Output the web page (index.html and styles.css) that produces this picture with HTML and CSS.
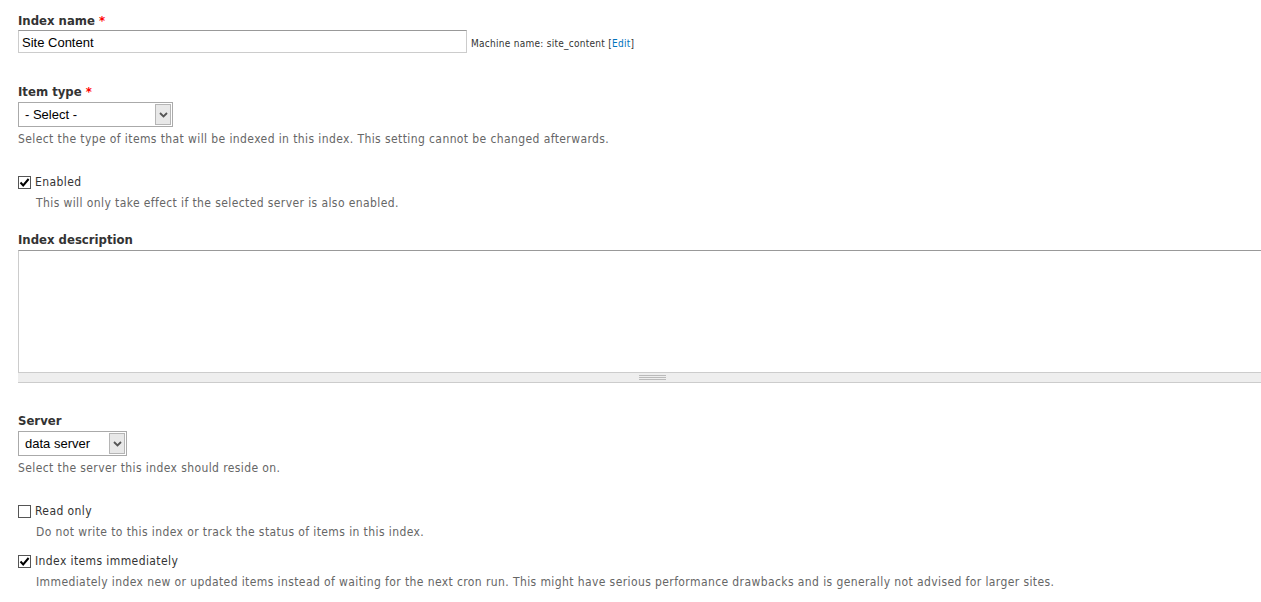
FILE: index.html
```html
<!DOCTYPE html>
<html>
<head>
<meta charset="utf-8">
<link rel="stylesheet" href="styles.css">
</head>
<body>
<form class="form">
  <div class="item item-name">
    <div class="label label-first">Index name <span class="req">*</span></div>
    <div class="row">
      <div class="text-input">Site Content</div>
      <span class="machine">Machine name: site_content <span class="link-wrap">[<a class="link">Edit</a>]</span></span>
    </div>
  </div>

  <div class="item item-type">
    <div class="label">Item type <span class="req">*</span></div>
    <div class="select select-type"><span class="select-text">- Select -</span><span class="select-btn"><svg width="9" height="6" viewBox="0 0 9 6"><path d="M1 1 L4.5 4.5 L8 1" fill="none" stroke="#555" stroke-width="1.8"/></svg></span></div>
    <div class="desc">Select the type of items that will be indexed in this index. This setting cannot be changed afterwards.</div>
  </div>

  <div class="item check-item item-enabled">
    <div class="check-row"><span class="box"><svg width="11" height="11" viewBox="0 0 11 11"><path d="M1.5 5.5 L4.2 8.4 L9.6 2" fill="none" stroke="#000" stroke-width="2"/></svg></span><span class="check-label">Enabled</span></div>
    <div class="desc indent">This will only take effect if the selected server is also enabled.</div>
  </div>

  <div class="item item-desc">
    <div class="label">Index description</div>
    <div class="textarea-wrap">
      <div class="textarea"></div>
      <div class="grippie"><span class="grip"></span></div>
    </div>
  </div>

  <div class="item item-server">
    <div class="label">Server</div>
    <div class="select select-server"><span class="select-text">data server</span><span class="select-btn"><svg width="9" height="6" viewBox="0 0 9 6"><path d="M1 1 L4.5 4.5 L8 1" fill="none" stroke="#555" stroke-width="1.8"/></svg></span></div>
    <div class="desc">Select the server this index should reside on.</div>
  </div>

  <div class="item check-item item-readonly">
    <div class="check-row"><span class="box"></span><span class="check-label">Read only</span></div>
    <div class="desc indent">Do not write to this index or track the status of items in this index.</div>
  </div>

  <div class="item check-item item-immediate">
    <div class="check-row"><span class="box"><svg width="11" height="11" viewBox="0 0 11 11"><path d="M1.5 5.5 L4.2 8.4 L9.6 2" fill="none" stroke="#000" stroke-width="2"/></svg></span><span class="check-label">Index items immediately</span></div>
    <div class="desc indent">Immediately index new or updated items instead of waiting for the next cron run. This might have serious performance drawbacks and is generally not advised for larger sites.</div>
  </div>
</form>
</body>
</html>
```

FILE: styles.css
```css
html {
  overflow: hidden;
}
body {
  margin: 0;
  background: #fff;
  color: #333;
  font-family: "DejaVu Sans Condensed", "DejaVu Sans", sans-serif;
}
.form {
  padding: 12px 0 0 18px;
}
.item {
  display: flex;
  flex-direction: column;
  align-items: flex-start;
}
.label {
  font-weight: bold;
  font-size: 13px;
  line-height: 18px;
  color: #333;
  margin-bottom: 1px;
}
.label-first {
  margin-bottom: 0;
}
.req {
  color: #f00;
}
.row {
  display: flex;
  align-items: center;
  gap: 4px;
}
.text-input {
  box-sizing: border-box;
  width: 449px;
  height: 23px;
  border: 1px solid #ccc;
  border-top-color: #999;
  font-family: "Liberation Sans", Arial, sans-serif;
  font-size: 13px;
  line-height: 21px;
  padding: 1px 3px 0;
  color: #000;
}
.machine {
  font-size: 10px;
  letter-spacing: 0.27px;
  color: #333;
  padding-top: 4px;
}
.link {
  color: #0074bd;
}
.item-type {
  margin-top: 30px;
}
.select {
  box-sizing: border-box;
  height: 25px;
  border: 1px solid #aaa;
  display: flex;
  align-items: stretch;
  font-family: "Liberation Sans", Arial, sans-serif;
  font-size: 13px;
  color: #000;
  background: #fff;
}
.select-type {
  width: 155px;
}
.select-server {
  width: 109px;
}
.select-text {
  flex: 1;
  padding-left: 6px;
  line-height: 23px;
}
.select-btn {
  width: 16px;
  margin: 1px;
  box-sizing: border-box;
  border: 1px solid #b5b5b5;
  background: #e8e8e8;
  display: flex;
  align-items: center;
  justify-content: center;
}
.desc {
  font-size: 12px;
  letter-spacing: 0.4px;
  line-height: 15px;
  color: #666;
  margin-top: 5px;
}
.indent {
  margin-left: 18px;
  margin-top: 6px;
}
.item-enabled {
  margin-top: 27px;
}
.check-row {
  display: flex;
  align-items: center;
  gap: 4px;
}
.box {
  box-sizing: border-box;
  width: 13px;
  height: 13px;
  border: 1px solid #555;
  background: #fff;
  display: flex;
  align-items: center;
  justify-content: center;
}
.check-label {
  font-size: 12px;
  letter-spacing: 0.4px;
  line-height: 16px;
  color: #333;
}
.item-desc {
  margin-top: 20px;
  align-items: stretch;
}
.textarea-wrap {
  margin-right: -25px;
}
.textarea {
  box-sizing: border-box;
  height: 122px;
  border: 1px solid #ccc;
  border-top-color: #999;
  border-bottom: none;
}
.grippie {
  box-sizing: border-box;
  height: 11px;
  background: #eee;
  border-top: 1px solid #ccc;
  border-bottom: 1px solid #ccc;
  display: flex;
  justify-content: center;
}
.grip {
  margin-top: 2px;
  width: 27px;
  height: 5px;
  border-top: 1px solid #bbb;
  border-bottom: 1px solid #bbb;
  box-sizing: border-box;
  background: linear-gradient(#eee 1px, #bbb 1px, #bbb 2px, #eee 2px);
}
.item-server {
  margin-top: 29px;
}
.item-readonly {
  margin-top: 27px;
}
.item-immediate {
  margin-top: 13px;
}
```
